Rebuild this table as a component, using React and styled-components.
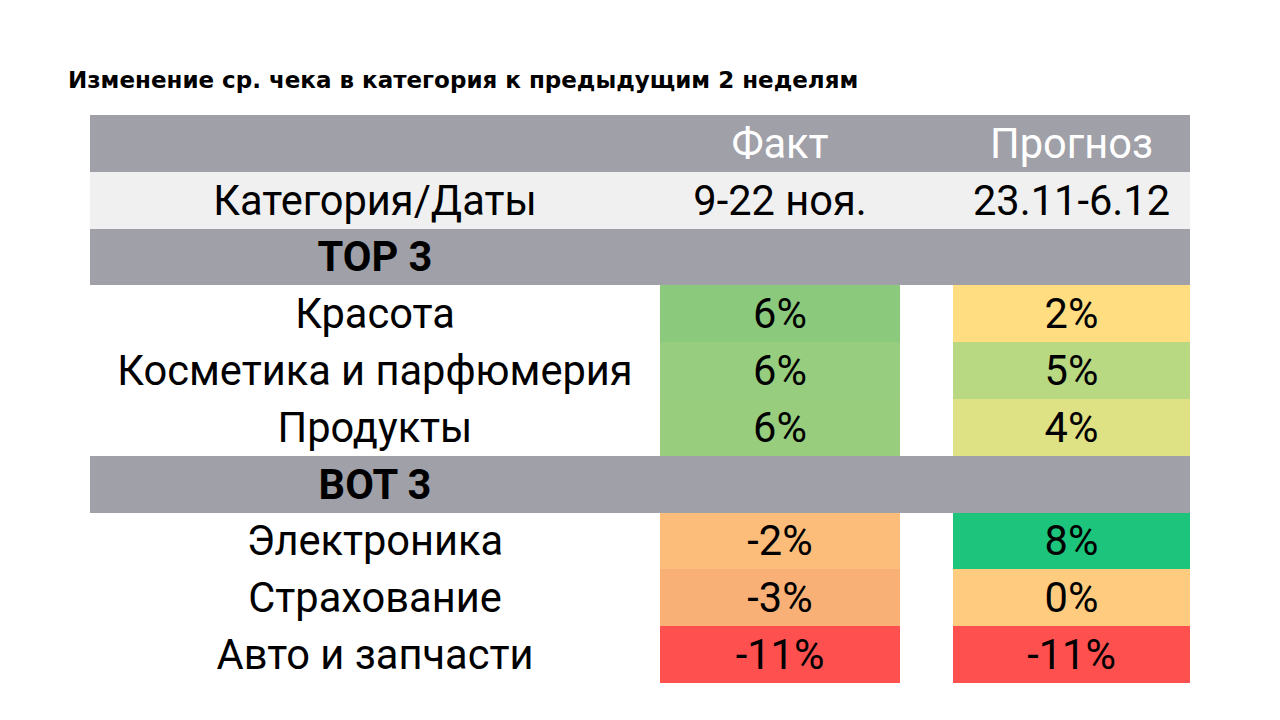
import React from "react";
import styled, { createGlobalStyle } from "styled-components";

const GlobalStyle = createGlobalStyle`
  body {
    margin: 0;
    background: #ffffff;
    font-family: Roboto, "Liberation Sans", sans-serif;
  }
`;

const rows = [
  { type: "group", label: "TOP 3" },
  { type: "data", label: "Красота", fact: "6%", factBg: "#8bca7c", plan: "2%", planBg: "#ffdd80" },
  { type: "data", label: "Косметика и парфюмерия", fact: "6%", factBg: "#97cd7e", plan: "5%", planBg: "#b9d882" },
  { type: "data", label: "Продукты", fact: "6%", factBg: "#98cd7e", plan: "4%", planBg: "#dee184" },
  { type: "group", label: "BOT 3" },
  { type: "data", label: "Электроника", fact: "-2%", factBg: "#fbbd79", plan: "8%", planBg: "#1dc47c" },
  { type: "data", label: "Страхование", fact: "-3%", factBg: "#f9b077", plan: "0%", planBg: "#ffcb7f" },
  { type: "data", label: "Авто и запчасти", fact: "-11%", factBg: "#ff5050", plan: "-11%", planBg: "#ff5050" },
];

const App = () => (
  <Page>
    <GlobalStyle />
    <Title>Изменение ср. чека в категория к предыдущим 2 неделям</Title>
    <Table>
      <Row $bg="#a0a0a8">
        <Cell />
        <Cell $light>Факт</Cell>
        <Gap />
        <Cell $light>Прогноз</Cell>
      </Row>
      <Row $bg="#f0f0f0">
        <Cell>Категория/Даты</Cell>
        <Cell>9-22 ноя.</Cell>
        <Gap />
        <Cell>23.11-6.12</Cell>
      </Row>
      {rows.map((r) =>
        r.type === "group" ? (
          <Row key={r.label} $bg="#a0a0a8">
            <Cell $bold>{r.label}</Cell>
            <Cell />
            <Gap />
            <Cell />
          </Row>
        ) : (
          <Row key={r.label}>
            <Cell>{r.label}</Cell>
            <Cell $bg={r.factBg}>{r.fact}</Cell>
            <Gap />
            <Cell $bg={r.planBg}>{r.plan}</Cell>
          </Row>
        )
      )}
    </Table>
  </Page>
);

export default App;

const Page = styled.div`
  width: 1280px;
  height: 720px;
  padding: 67px 0 0 68px;
  box-sizing: border-box;
  overflow: hidden;
`;

const Title = styled.h1`
  margin: 0 0 21px;
  font-family: "DejaVu Sans", Roboto, sans-serif;
  font-size: 23px;
  font-weight: 700;
  line-height: 27px;
  color: #000;
  white-space: nowrap;
`;

const Table = styled.div`
  margin-left: 22px;
  width: 1100px;
  display: flex;
  flex-direction: column;
`;

const Row = styled.div`
  display: grid;
  grid-template-columns: 570px 240px 53px 237px;
  height: 56.8px;
  background: ${(p) => p.$bg || "transparent"};
`;

const Cell = styled.div`
  display: flex;
  align-items: center;
  justify-content: center;
  font-size: 41.6px;
  font-weight: ${(p) => (p.$bold ? 700 : 400)};
  color: ${(p) => (p.$light ? "#ffffff" : "#000000")};
  background: ${(p) => p.$bg || "transparent"};
  white-space: nowrap;
`;

const Gap = styled.div``;
